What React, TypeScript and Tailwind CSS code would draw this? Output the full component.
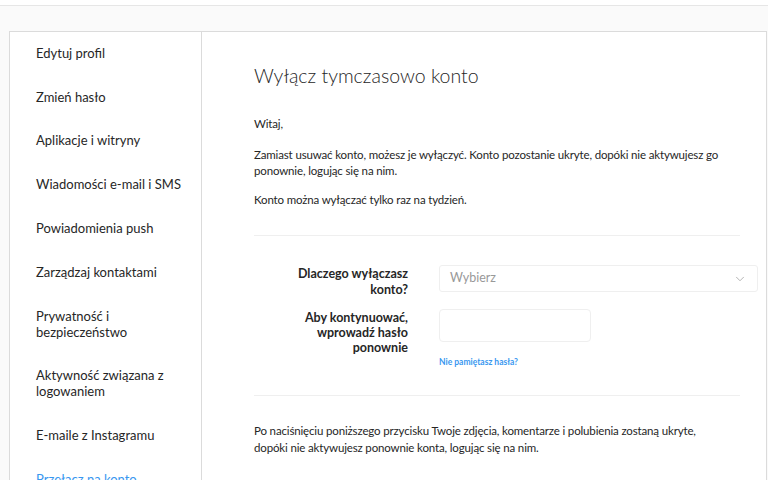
import { ChevronDown } from 'lucide-react';

const menu = [
  'Edytuj profil',
  'Zmień hasło',
  'Aplikacje i witryny',
  'Wiadomości e-mail i SMS',
  'Powiadomienia push',
  'Zarządzaj kontaktami',
  'Prywatność i bezpieczeństwo',
  'Aktywność związana z logowaniem',
  'E-maile z Instagramu',
];

export default function App() {
  return (
    <div className="min-h-screen bg-[#fafafa] text-[#262626] font-['Lato',sans-serif]">
      {/* top bar */}
      <div className="h-[6px] bg-white border-b border-[#e6e6e6]" />

      <div className="pt-[25px] pl-[9px] pr-[1px]">
        <div className="flex bg-white border border-[#dbdbdb] h-[460px] overflow-hidden">
          {/* Sidebar */}
          <ul className="w-[192px] shrink-0 border-r border-[#dbdbdb] -mt-[1px]">
            {menu.map((item) => (
              <li key={item} className="pl-[26px] pr-[18px] py-[13.9px] text-[13px] leading-[16px]">
                {item}
              </li>
            ))}
            <li className="pl-[26px] pr-[18px] py-[13.9px] text-[13px] leading-[16px] text-[#3897f0]">
              Przełącz na konto firmowe
            </li>
          </ul>

          {/* Content */}
          <div className="flex-1 pl-[52px] pr-[26px] pt-[32px]">
            <h1 className="text-[19.5px] font-light leading-[24px]">Wyłącz tymczasowo konto</h1>

            <div className="mt-[28px] text-[11.5px] leading-[16px] tracking-[-0.15px]">
              <p>Witaj,</p>
              <p className="mt-[15px]">
                Zamiast usuwać konto, możesz je wyłączyć. Konto pozostanie ukryte, dopóki nie aktywujesz go
                ponownie, logując się na nim.
              </p>
              <p className="mt-[13px]">Konto można wyłączać tylko raz na tydzień.</p>
            </div>

            <div className="mt-[27px] border-t border-[#efefef]" />

            {/* Form */}
            <div className="mt-[29px] flex flex-col gap-[11px]">
              <div className="flex">
                <label className="w-[154px] shrink-0 pl-[34px] text-right text-[12.5px] font-bold leading-[16px] pt-[1px]">
                  Dlaczego wyłączasz konto?
                </label>
                <div className="ml-[31px] flex-1 -mr-[18px]">
                  <div className="flex items-center justify-between h-[27px] border border-[#efefef] rounded-[3px] pl-[10px] pr-[10px]">
                    <span className="text-[12.5px] text-[#999]">Wybierz</span>
                    <ChevronDown size={14} strokeWidth={1.25} className="text-[#999]" />
                  </div>
                </div>
              </div>

              <div className="flex">
                <label className="w-[154px] shrink-0 pl-[34px] text-right text-[12.5px] font-bold leading-[15px] pt-[1px]">
                  Aby kontynuować, wprowadź hasło ponownie
                </label>
                <div className="ml-[31px] flex-1">
                  <div className="w-[152px] h-[33px] border border-[#efefef] rounded-[4px] bg-white" />
                  <a className="block mt-[14px] text-[8.5px] font-bold text-[#3897f0]">Nie pamiętasz hasła?</a>
                </div>
              </div>
            </div>

            <div className="mt-[26px] border-t border-[#efefef]" />

            <p className="mt-[26px] max-w-[450px] text-[11.5px] leading-[17px] tracking-[-0.15px]">
              Po naciśnięciu poniższego przycisku Twoje zdjęcia, komentarze i polubienia zostaną ukryte,
              dopóki nie aktywujesz ponownie konta, logując się na nim.
            </p>
          </div>
        </div>
      </div>
    </div>
  );
}
